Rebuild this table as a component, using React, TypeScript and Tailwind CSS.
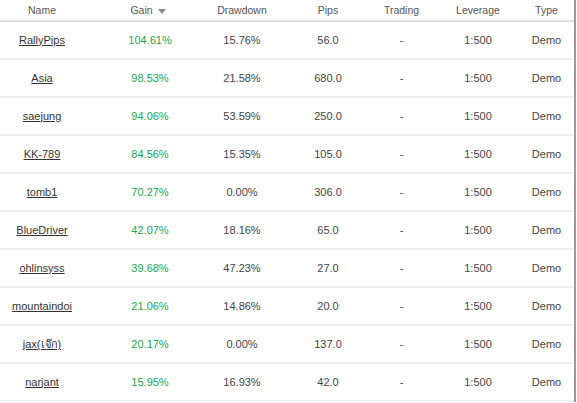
const rows = [
  { name: 'RallyPips', gain: '104.61%', dd: '15.76%', pips: '56.0' },
  { name: 'Asia', gain: '98.53%', dd: '21.58%', pips: '680.0' },
  { name: 'saejung', gain: '94.06%', dd: '53.59%', pips: '250.0' },
  { name: 'KK-789', gain: '84.56%', dd: '15.35%', pips: '105.0' },
  { name: 'tomb1', gain: '70.27%', dd: '0.00%', pips: '306.0' },
  { name: 'BlueDriver', gain: '42.07%', dd: '18.16%', pips: '65.0' },
  { name: 'ohlinsyss', gain: '39.68%', dd: '47.23%', pips: '27.0' },
  { name: 'mountaindoi', gain: '21.06%', dd: '14.86%', pips: '20.0' },
  { name: 'jax(เจ๊ก)', gain: '20.17%', dd: '0.00%', pips: '137.0' },
  { name: 'narjant', gain: '15.95%', dd: '16.93%', pips: '42.0' },
];

const grid = 'grid grid-cols-[96px_100px_89px_80px_75px_73px_63px]';
const cell = 'flex justify-center whitespace-nowrap';

export default function App() {
  return (
    <div
      className="w-[577px] h-[403px] bg-white overflow-hidden"
      style={{ fontFamily: '"Liberation Sans", Arial, sans-serif' }}
    >
      <div className="w-[576px] border-r-2 border-[#9a9a9a]">
        <div className={`${grid} h-[22px] pt-[2px] items-center border-b-2 border-[#e2e2e2] text-[10.5px] text-[#555]`}>
          <div className={`${cell} pr-[12px]`}>Name</div>
          <div className={`${cell} pl-[4px] items-center gap-[5px]`}>
            <span>Gain</span>
            <svg width="8" height="5" viewBox="0 0 8 5">
              <path d="M0 0 L8 0 L4 5 Z" fill="#888" />
            </svg>
          </div>
          <div className={`${cell} pl-[3px]`}>Drawdown</div>
          <div className={`${cell} pl-[6px]`}>Pips</div>
          <div className={`${cell} pr-[2px]`}>Trading</div>
          <div className={`${cell} pl-[3px]`}>Leverage</div>
          <div className={`${cell} pl-[4px]`}>Type</div>
        </div>
        {rows.map((r) => (
          <div
            key={r.name}
            className={`${grid} h-[38px] items-center border-b-2 border-[#f0f0f0] text-[11px] text-[#444]`}
          >
            <div className={`${cell} pr-[12px]`}>
              <a href="#" className="underline text-[#333]">
                {r.name}
              </a>
            </div>
            <div className={`${cell} pl-[8px] text-[#1aa64a]`}>{r.gain}</div>
            <div className={`${cell} pl-[3px]`}>{r.dd}</div>
            <div className={`${cell} pl-[6px]`}>{r.pips}</div>
            <div className={`${cell} pr-[2px]`}>-</div>
            <div className={`${cell} pl-[3px]`}>1:500</div>
            <div className={`${cell} pl-[4px]`}>Demo</div>
          </div>
        ))}
      </div>
    </div>
  );
}
